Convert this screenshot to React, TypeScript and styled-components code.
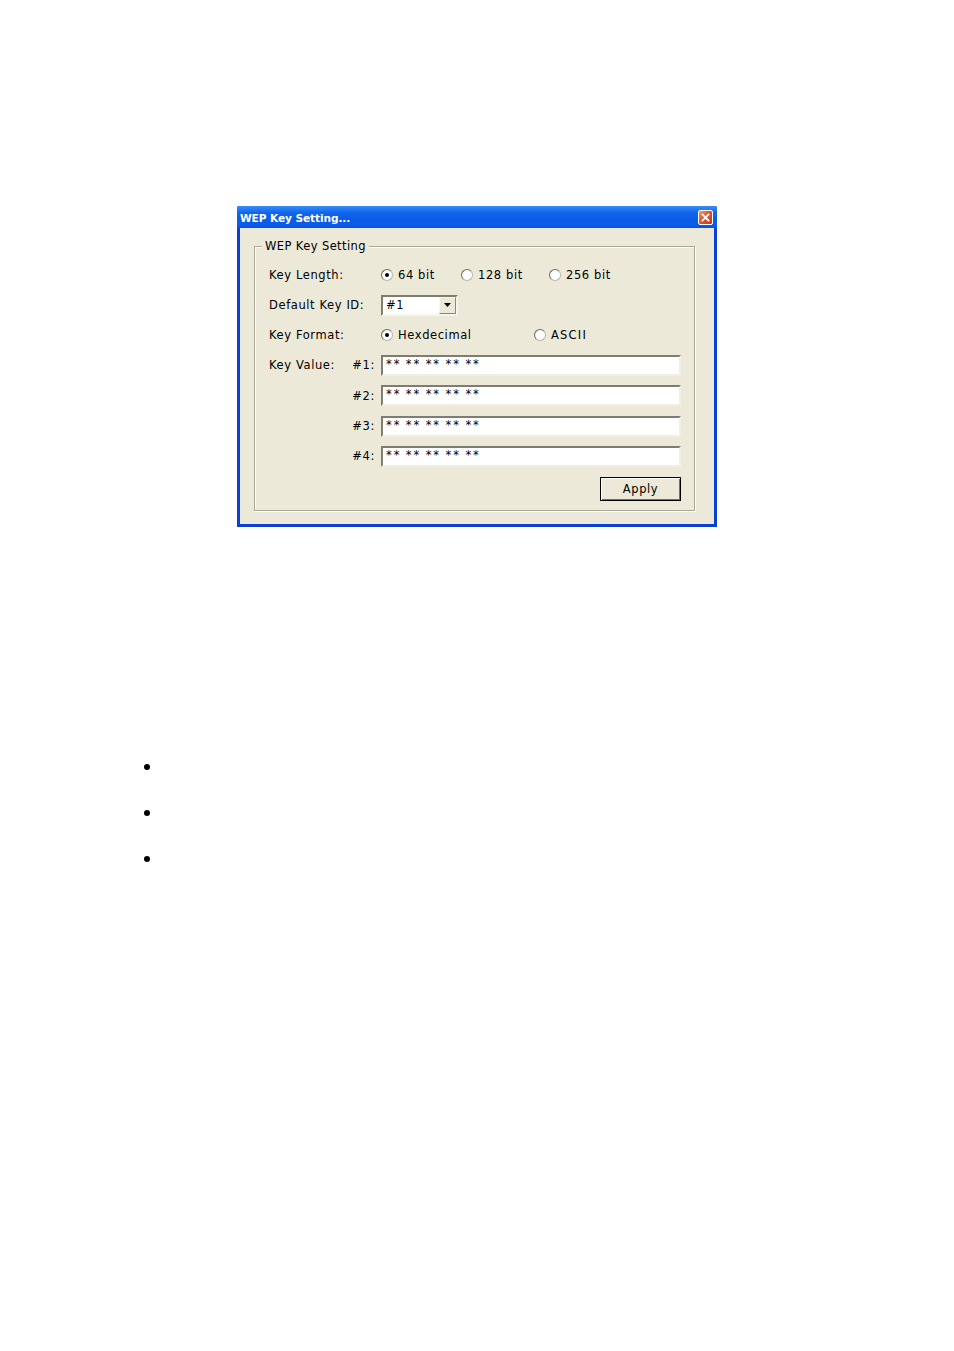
import React from "react";
import styled, { createGlobalStyle } from "styled-components";

const Global = createGlobalStyle`
  html, body { margin: 0; padding: 0; background: #ffffff; }
  body { font-family: "DejaVu Sans", "Liberation Sans", sans-serif; }
`;

const Page = styled.div`
  width: 954px;
  height: 1351px;
  padding: 206px 0 0 237px;
  box-sizing: border-box;
  position: relative;
`;

const Window = styled.div`
  width: 480px;
  height: 321px;
  box-sizing: border-box;
  display: flex;
  flex-direction: column;
  background: #0a3fd8;
  border-radius: 2px 2px 0 0;
`;

const TitleBar = styled.div`
  height: 22px;
  flex: none;
  display: flex;
  align-items: center;
  justify-content: space-between;
  padding: 0 4px 0 3px;
  background: linear-gradient(#3b8cf7 0%, #1166ec 30%, #0a5be6 60%, #0b5ce8 85%, #0950d8 100%);
  border-radius: 2px 2px 0 0;
`;

const Title = styled.span`
  color: #ffffff;
  font-family: "DejaVu Sans", sans-serif;
  font-weight: bold;
  font-size: 10.6px;
  letter-spacing: -0.1px;
  padding-top: 2px;
`;

const CloseBtn = styled.div`
  width: 13px;
  height: 13px;
  border: 1px solid #ffffff;
  border-radius: 2px;
  background: linear-gradient(135deg, #f39a7a, #e2532d 45%, #c9391a);
  display: flex;
  align-items: center;
  justify-content: center;
  margin-top: 1px;
`;

const Body = styled.div`
  flex: 1;
  margin: 0 3px 3px 3px;
  background: #ece9d8;
  padding: 18px 19px 13px 14px;
  display: flex;
  flex-direction: column;
`;

const Group = styled.div`
  position: relative;
  flex: 1;
  border: 1px solid #aca899;
  box-shadow: inset 1px 1px 0 #ffffff, 1px 1px 0 #ffffff;
  padding: 12px 13px 0 14px;
  display: flex;
  flex-direction: column;
`;

const Legend = styled.span`
  position: absolute;
  top: -7px;
  left: 7px;
  padding: 0 3px;
  background: #ece9d8;
  font-size: 11.5px;
  color: #000;
  line-height: 13px;
  letter-spacing: 0.4px;
`;

const Row = styled.div<{ $h: number }>`
  display: flex;
  align-items: center;
  height: ${(p) => p.$h}px;
  font-size: 11.5px;
  letter-spacing: 0.6px;
  color: #000;
`;

const Label = styled.div<{ $right?: boolean }>`
  width: 112px;
  flex: none;
  display: flex;
  justify-content: ${(p) => (p.$right ? "flex-end" : "space-between")};
  padding-right: 6px;
  box-sizing: border-box;
`;

const Option = styled.label<{ $w?: number }>`
  display: flex;
  align-items: center;
  gap: 5px;
  width: ${(p) => (p.$w ? `${p.$w}px` : "auto")};
  flex: none;
`;

const Caps = styled.span`
  letter-spacing: 1.2px;
`;

const Radio = styled.span<{ $on?: boolean }>`
  width: 12px;
  height: 12px;
  box-sizing: border-box;
  border-radius: 50%;
  border: 1px solid #b8b6ac;
  border-top-color: #6f6e68;
  border-left-color: #6f6e68;
  background: radial-gradient(circle at 60% 60%, #ffffff 0 50%, #dcd9cc 100%);
  display: flex;
  align-items: center;
  justify-content: center;
  &::after {
    content: "";
    width: 4px;
    height: 4px;
    border-radius: 50%;
    background: ${(p) => (p.$on ? "#000" : "transparent")};
  }
`;

const Select = styled.div`
  width: 77px;
  height: 21px;
  box-sizing: border-box;
  border: 2px solid;
  border-color: #7f7d72 #f5f4ee #f5f4ee #7f7d72;
  background: #fff;
  display: flex;
  align-items: stretch;
`;

const SelectText = styled.span`
  flex: 1;
  padding-left: 3px;
  display: flex;
  align-items: center;
  font-size: 11.5px;
`;

const DropBtn = styled.span`
  width: 17px;
  flex: none;
  background: #ece9d8;
  border: 1px solid;
  border-color: #f8f7f2 #8a887e #8a887e #f8f7f2;
  box-sizing: border-box;
  display: flex;
  align-items: center;
  justify-content: center;
`;

const Field = styled.div`
  flex: 1;
  height: 21px;
  box-sizing: border-box;
  border: 2px solid;
  border-color: #7f7d72 #f1efe2 #f1efe2 #7f7d72;
  background: #fff;
  padding: 0 3px;
  font-size: 11.5px;
  letter-spacing: 1.9px;
  word-spacing: -1px;
  line-height: 15px;
  color: #000;
`;

const ButtonRow = styled.div`
  display: flex;
  justify-content: flex-end;
  margin-top: 6px;
`;

const Button = styled.button`
  width: 81px;
  height: 24px;
  box-sizing: border-box;
  background: #ece9d8;
  border: 1px solid #000;
  box-shadow: inset 1px 1px 0 #ffffff, inset -1px -1px 0 #716f64;
  font-family: "DejaVu Sans", sans-serif;
  font-size: 11.5px;
  letter-spacing: 0.6px;
  color: #000;
  padding: 0;
`;

const Bullets = styled.ul`
  list-style: none;
  margin: 237px 0 0 -93px;
  padding: 0;
  display: flex;
  flex-direction: column;
  gap: 40px;
`;

const Bullet = styled.li`
  width: 6px;
  height: 6px;
  border-radius: 50%;
  background: #000;
`;

const keys = ["#1:", "#2:", "#3:", "#4:"];

export default function App() {
  return (
    <>
      <Global />
      <Page>
        <Window>
          <TitleBar>
            <Title>WEP Key Setting...</Title>
            <CloseBtn>
              <svg width="9" height="9" viewBox="0 0 9 9">
                <path d="M1.5 1.5 L7.5 7.5 M7.5 1.5 L1.5 7.5" stroke="#fff" strokeWidth="1.8" strokeLinecap="square" />
              </svg>
            </CloseBtn>
          </TitleBar>
          <Body>
            <Group>
              <Legend>WEP Key Setting</Legend>
              <Row $h={31}>
                <Label>Key Length:</Label>
                <Option $w={80}><Radio $on />64 bit</Option>
                <Option $w={88}><Radio />128 bit</Option>
                <Option><Radio />256 bit</Option>
              </Row>
              <Row $h={30}>
                <Label>Default Key ID:</Label>
                <Select>
                  <SelectText>#1</SelectText>
                  <DropBtn>
                    <svg width="7" height="4" viewBox="0 0 7 4">
                      <path d="M0 0 H7 L3.5 4 Z" fill="#000" />
                    </svg>
                  </DropBtn>
                </Select>
              </Row>
              <Row $h={30}>
                <Label>Key Format:</Label>
                <Option $w={153}><Radio $on />Hexdecimal</Option>
                <Option><Radio /><Caps>ASCII</Caps></Option>
              </Row>
              {keys.map((k, i) => (
                <Row key={k} $h={i === 1 ? 31 : 30}>
                  {i === 0 ? (
                    <Label><span>Key Value:</span><span>{k}</span></Label>
                  ) : (
                    <Label $right>{k}</Label>
                  )}
                  <Field>** ** ** ** **</Field>
                </Row>
              ))}
              <ButtonRow>
                <Button>Apply</Button>
              </ButtonRow>
            </Group>
          </Body>
        </Window>
        <Bullets>
          <Bullet />
          <Bullet />
          <Bullet />
        </Bullets>
      </Page>
    </>
  );
}
